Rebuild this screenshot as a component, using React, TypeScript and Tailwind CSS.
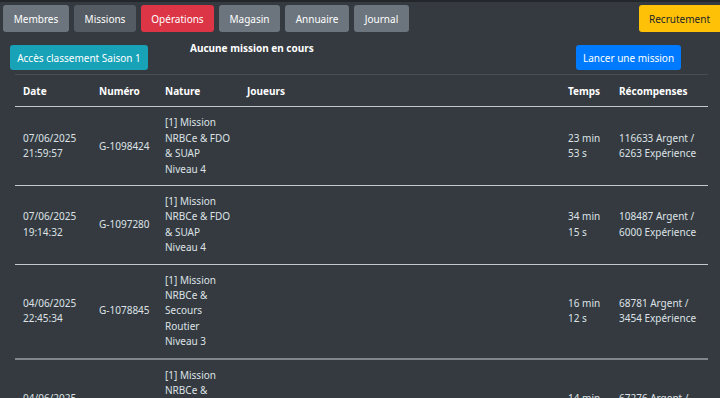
import React from 'react';

interface NavButtonProps {
  label: string;
  className: string;
}

const NavButton: React.FC<NavButtonProps> = ({ label, className }) => (
  <button className={`h-[27px] rounded-[3px] text-[10px] leading-none ${className}`}>{label}</button>
);

interface Mission {
  date: string[];
  numero: string;
  nature: string[];
  temps: string[];
  recompenses: string[];
}

const missions: Mission[] = [
  {
    date: ['07/06/2025', '21:59:57'],
    numero: 'G-1098424',
    nature: ['[1] Mission', 'NRBCe & FDO', '& SUAP', 'Niveau 4'],
    temps: ['23 min', '53 s'],
    recompenses: ['116633 Argent /', '6263 Expérience'],
  },
  {
    date: ['07/06/2025', '19:14:32'],
    numero: 'G-1097280',
    nature: ['[1] Mission', 'NRBCe & FDO', '& SUAP', 'Niveau 4'],
    temps: ['34 min', '15 s'],
    recompenses: ['108487 Argent /', '6000 Expérience'],
  },
  {
    date: ['04/06/2025', '22:45:34'],
    numero: 'G-1078845',
    nature: ['[1] Mission', 'NRBCe &', 'Secours', 'Routier', 'Niveau 3'],
    temps: ['16 min', '12 s'],
    recompenses: ['68781 Argent /', '3454 Expérience'],
  },
  {
    date: ['04/06/2025', '20:31:08'],
    numero: 'G-1077310',
    nature: ['[1] Mission', 'NRBCe &', 'Secours', 'Routier', 'Niveau 3'],
    temps: ['14 min', '40 s'],
    recompenses: ['67276 Argent /', '3380 Expérience'],
  },
];

const Lines: React.FC<{ lines: string[] }> = ({ lines }) => (
  <>
    {lines.map((l, i) => (
      <div key={i}>{l}</div>
    ))}
  </>
);

export default function App() {
  return (
    <div
      className="h-[398px] w-[720px] overflow-hidden border-t-2 border-[#23272b] bg-[#343a40] text-[10px] leading-[15.4px] text-[#dee2e6]"
      style={{ fontFamily: '"Noto Sans", "Open Sans", sans-serif' }}
    >
      {/* top nav */}
      <div className="flex items-center pl-[3px] pt-[3px]">
        <div className="flex gap-[5px]">
          <NavButton label="Membres" className="w-[66px] bg-[#6c757d] text-white" />
          <NavButton label="Missions" className="w-[62px] bg-[#545b62] text-white" />
          <NavButton label="Opérations" className="w-[73px] bg-[#dc3545] text-white" />
          <NavButton label="Magasin" className="w-[61px] bg-[#6c757d] text-white" />
          <NavButton label="Annuaire" className="w-[64px] bg-[#6c757d] text-white" />
          <NavButton label="Journal" className="w-[55px] bg-[#6c757d] text-white" />
        </div>
        <button className="ml-auto h-[27px] w-[81px] rounded-l-[3px] bg-[#ffc107] text-[10px] leading-none text-[#212529]">
          Recrutement
        </button>
      </div>

      {/* mission bar */}
      <div className="mt-[13px] flex items-start pl-[10px] pr-[39px]">
        <button className="h-[25px] w-[138px] rounded-[3px] bg-[#17a2b8] text-[10px] leading-none text-white">
          Accès classement Saison 1
        </button>
        <div className="ml-[42px] mt-[-4px] font-bold text-white">Aucune mission en cours</div>
        <button className="ml-auto h-[25px] w-[105px] rounded-[3px] bg-[#007bff] text-[10px] leading-none text-white">
          Lancer une mission
        </button>
      </div>

      {/* table */}
      <div className="mx-[15px] mt-[4px] w-[693px]">
        <table className="w-full table-fixed border-collapse text-left">
          <colgroup>
            <col className="w-[76px]" />
            <col className="w-[66px]" />
            <col className="w-[82px]" />
            <col />
            <col className="w-[51px]" />
            <col className="w-[97px]" />
          </colgroup>
          <thead>
            <tr className="border-t border-b border-t-[#454d55] border-b-[#c4c8cc] font-bold text-white">
              <th className="px-2 pt-[9px] pb-[7px] align-top">Date</th>
              <th className="px-2 pt-[9px] pb-[7px] align-top">Numéro</th>
              <th className="px-2 pt-[9px] pb-[7px] align-top">Nature</th>
              <th className="px-2 pt-[9px] pb-[7px] align-top">Joueurs</th>
              <th className="px-2 pt-[9px] pb-[7px] align-top">Temps</th>
              <th className="px-2 pt-[9px] pb-[7px] align-top">Récompenses</th>
            </tr>
          </thead>
          <tbody>
            {missions.map((m, i) => (
              <tr
                key={m.numero}
                className={i === 2 ? 'border-b-2 border-[#80868c]' : 'border-b border-[#c4c8cc]'}
              >
                <td className="px-2 py-2 align-middle whitespace-nowrap">
                  <Lines lines={m.date} />
                </td>
                <td className="px-2 py-2 align-middle whitespace-nowrap">{m.numero}</td>
                <td className="px-2 py-2 align-middle whitespace-nowrap">
                  <Lines lines={m.nature} />
                </td>
                <td className="px-2 py-2 align-middle"></td>
                <td className="px-2 py-2 align-middle whitespace-nowrap">
                  <Lines lines={m.temps} />
                </td>
                <td className="px-2 py-2 align-middle whitespace-nowrap">
                  <Lines lines={m.recompenses} />
                </td>
              </tr>
            ))}
          </tbody>
        </table>
      </div>
    </div>
  );
}
